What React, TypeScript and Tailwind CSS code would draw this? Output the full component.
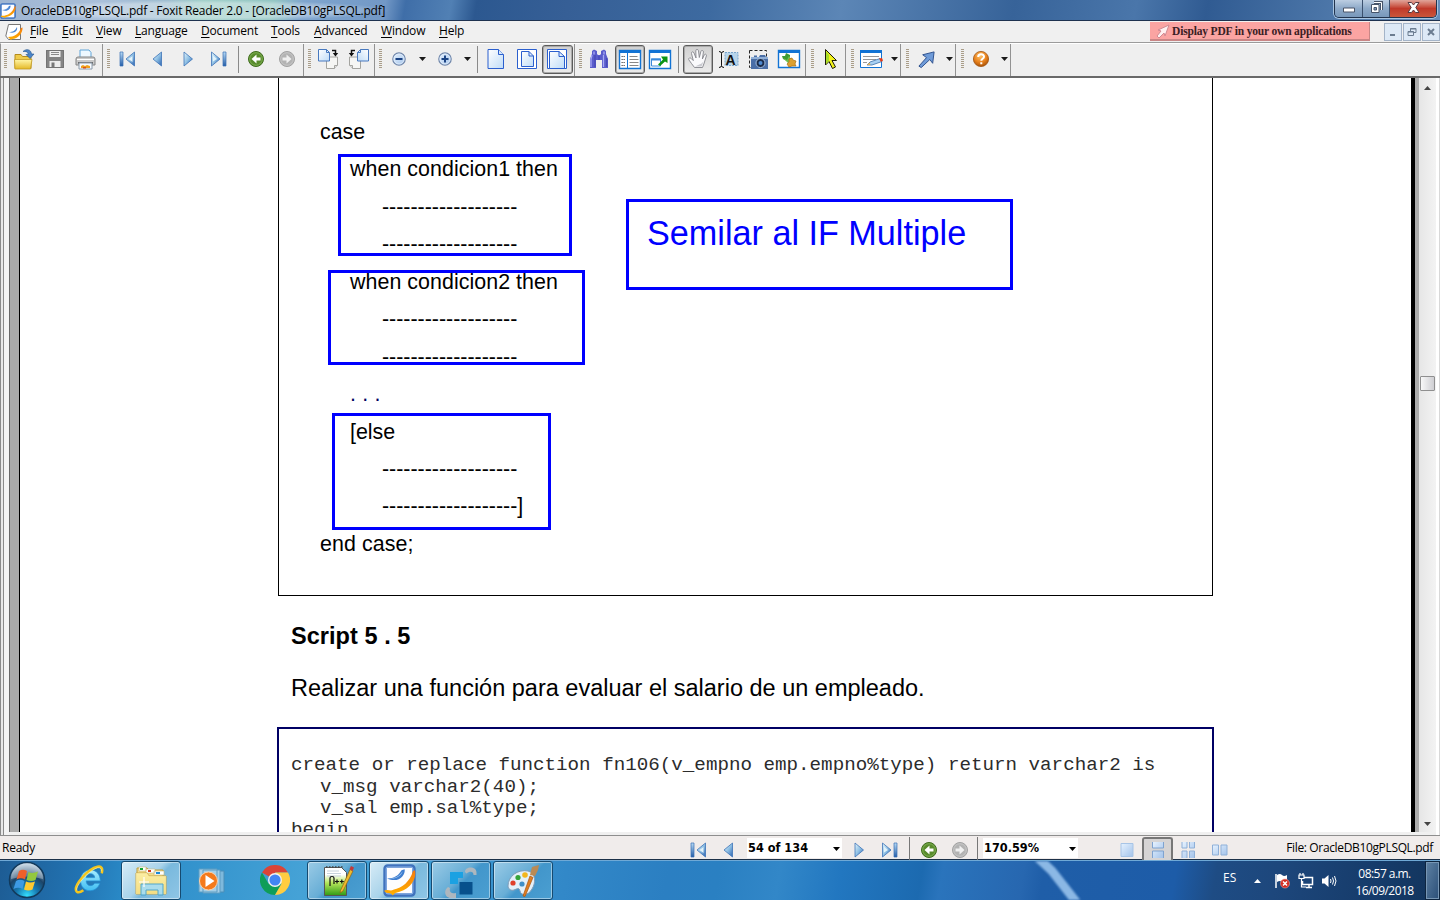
import React from "react";

type Kids = { children?: React.ReactNode };

const Svg = ({ s = 20, vb = "0 0 20 20", children }: Kids & { s?: number; vb?: string }) => (
  <svg width={s} height={s} viewBox={vb} className="block shrink-0" fill="none">
    {children}
  </svg>
);

const Defs = () => (
  <svg width="0" height="0" className="absolute">
    <defs>
      <linearGradient id="blue" x1="0" y1="0" x2="0" y2="1">
        <stop offset="0" stopColor="#b9dcf6" />
        <stop offset="1" stopColor="#245da8" />
      </linearGradient>
      <linearGradient id="tri" x1="0" y1="0" x2="1" y2="1">
        <stop offset="0" stopColor="#e6f6fc" />
        <stop offset=".5" stopColor="#8fc0e4" />
        <stop offset="1" stopColor="#2a62b0" />
      </linearGradient>
      <linearGradient id="page" x1="0" y1="0" x2="1" y2="1">
        <stop offset="0" stopColor="#ffffff" />
        <stop offset="1" stopColor="#bfdcf7" />
      </linearGradient>
      <linearGradient id="pageBlue" x1="0" y1="0" x2="1" y2="1">
        <stop offset="0" stopColor="#e6f2ff" />
        <stop offset="1" stopColor="#a3c3ea" />
      </linearGradient>
      <linearGradient id="gold" x1="0" y1="0" x2="0" y2="1">
        <stop offset="0" stopColor="#fff6a8" />
        <stop offset="1" stopColor="#e5b928" />
      </linearGradient>
      <linearGradient id="orange" x1="0" y1="0" x2="0" y2="1">
        <stop offset="0" stopColor="#f47a10" />
        <stop offset="1" stopColor="#ffb000" />
      </linearGradient>
      <linearGradient id="lime" x1="0" y1="0" x2="0" y2="1">
        <stop offset=".25" stopColor="#ffffff" />
        <stop offset=".55" stopColor="#b4e65a" />
        <stop offset="1" stopColor="#2f9a14" />
      </linearGradient>
      <radialGradient id="orb" cx=".5" cy=".95" r=".9">
        <stop offset="0" stopColor="#35e0ff" />
        <stop offset=".35" stopColor="#1678b0" />
        <stop offset=".65" stopColor="#1c4468" />
        <stop offset="1" stopColor="#b0c8da" />
      </radialGradient>
      <linearGradient id="ie" x1="0" y1="0" x2="0" y2="1">
        <stop offset="0" stopColor="#a8ecff" />
        <stop offset="1" stopColor="#3fbdf2" />
      </linearGradient>
      <radialGradient id="amber" cx=".45" cy=".3" r=".7">
        <stop offset="0" stopColor="#ffc46c" />
        <stop offset=".6" stopColor="#e8811c" />
        <stop offset="1" stopColor="#a85208" />
      </radialGradient>
    </defs>
  </svg>
);

/* ---------- toolbar icons ---------- */

const FoxitIcon = ({ s = 16 }: { s?: number }) => (
  <Svg s={s} vb="0 0 32 32">
    <rect x="2" y="2" width="28" height="28" rx="2.5" fill="#fdfdff" stroke="#3f72bd" strokeWidth="3.4" />
    <rect x="3" y="3" width="26" height="26" rx="2" stroke="#8db4e8" strokeWidth="1" />
    <path d="M4 14c7 0 11-3 14-8l3-1c1 6-6 14-17 9Z" fill="#3f7ed0" />
    <path d="M6 14c6 0 10-2 13-7-1 4-6 8-13 7Z" fill="#a8ccf2" />
    <path d="M1 26c4-2 6 1 9-1 9-2 16-8 19-18l2-1c2 10-6 20-19 22-2 1-2 3-3 2-2-3-5 0-8-4Z" fill="url(#orange)" />
  </Svg>
);

const OpenIcon = () => (
  <Svg s={22} vb="0 0 22 22">
    <path d="M2 6.500h6l1.500 2H18v12H2z" fill="#efcb4a" stroke="#b48a1c" />
    <path d="M1.500 11.500h17.500l-1.500 9.500H2z" fill="url(#gold)" stroke="#c39a22" strokeWidth=".8" />
    <path d="M10 3.500C13 .5 18 1 18.500 6H21l-4 4.500-4-4h2.400C15 4 13 3 10 3.500z" fill="#4c84c8" stroke="#24558f" strokeWidth=".6" />
  </Svg>
);
const SaveIcon = () => (
  <Svg>
    <path d="M1 1h18v18H1z" fill="#858585" />
    <path d="M4.500 1h11v7h-11z" fill="#f1f1f1" />
    <path d="M6 3.500h8M6 5.500h8" stroke="#8b8b8b" />
    <path d="M4.500 12h11v7h-11z" fill="#ededed" />
    <path d="M6.500 13.500h3v5h-3z" fill="#777" />
    <path d="M1.500 1.500h17v17h-17z" stroke="#747474" />
  </Svg>
);
const PrintIcon = () => (
  <Svg s={21} vb="0 0 21 21">
    <path d="M5 1h9l2 2.500V10H5z" fill="#eef8ff" stroke="#5ea4d8" />
    <path d="M1 10q0-2 2-2h15q2 0 2 2v6H1z" fill="#c9c9c9" stroke="#858585" />
    <path d="M2 10.500h17" stroke="#fff" />
    <path d="M3 14h15" stroke="#555" strokeWidth="1.600" />
    <path d="M4 14h13v6H4z" fill="#f7fbff" stroke="#8a9aaa" />
    <path d="M6 17l2-1 2 1 2-1 3 1v2H6z" fill="#f0a01c" />
    <path d="M8 18h3v1.500H8z" fill="#d9501c" />
  </Svg>
);
const FirstIcon = () => (
  <Svg s={18} vb="0 0 18 18">
    <path d="M2 2h3v14H2z" fill="url(#blue)" stroke="#3a70b4" strokeWidth=".7" />
    <path d="M16.500 2v14L8 9z" fill="url(#tri)" stroke="#3d74b8" strokeWidth=".8" />
    <path d="M14.500 6v6L10.500 9z" fill="#e3f3fa" />
  </Svg>
);
const LastIcon = () => (
  <Svg s={18} vb="0 0 18 18">
    <path d="M13 2h3v14h-3z" fill="url(#blue)" stroke="#3a70b4" strokeWidth=".7" />
    <path d="M1.500 2v14L10 9z" fill="url(#tri)" stroke="#3d74b8" strokeWidth=".8" />
    <path d="M3 5.500v6L7 9z" fill="#e3f3fa" />
  </Svg>
);
const PrevIcon = () => (
  <Svg s={18} vb="0 0 18 18">
    <path d="M12.500 2v14L4 9z" fill="url(#tri)" stroke="#3d74b8" strokeWidth=".8" />
  </Svg>
);
const NextIcon = () => (
  <Svg s={18} vb="0 0 18 18">
    <path d="M5 2v14L13.500 9z" fill="url(#tri)" stroke="#3d74b8" strokeWidth=".8" />
  </Svg>
);
const RoundArrow = ({ dim = false }: { dim?: boolean }) => (
  <Svg s={18} vb="0 0 18 18">
    <circle cx="9" cy="9" r="7.500" fill={dim ? "#b3b3b3" : "#588b2c"} stroke={dim ? "#a2a2a2" : "#3f6c1d"} />
    <circle cx="9" cy="9" r="6.300" stroke={dim ? "#cbcbcb" : "#86b75c"} strokeWidth=".8" />
    {dim ? (
      <path d="M4.500 7.500h4v-3L13.500 9l-5 4.500v-3h-4z" fill="#f0f0f0" />
    ) : (
      <path d="M13.500 7.500h-4v-3L4.500 9l5 4.500v-3h4z" fill="#fff" />
    )}
  </Svg>
);
const RotateIcon = ({ flip = false }: { flip?: boolean }) => (
  <Svg s={22} vb="0 0 22 22">
    <g transform={flip ? "matrix(-1 0 0 1 22 0)" : undefined}>
      <path d="M9.500 9h11v8l-3 3.500h-8z" fill="#f6f6f4" stroke="#a4a4a0" />
      <path d="M17.500 20.500v-3h3" stroke="#a4a4a0" fill="#ddd" />
      <path d="M1.500 1.500h8l3 3V13h-11z" fill="url(#page)" stroke="#4879bf" />
      <path d="M9.500 1.500v3h3" stroke="#4879bf" />
      <path d="M15 2.500h3.500V6" stroke="#111" strokeWidth="1.500" />
      <path d="M15.800 5h5.400l-2.700 3.500z" fill="#111" />
    </g>
  </Svg>
);
const ZoomIcon = ({ plus = false }: { plus?: boolean }) => (
  <Svg s={16} vb="0 0 16 16">
    <circle cx="8" cy="8" r="6.200" fill="url(#pageBlue)" stroke="#7187aa" strokeWidth="1.200" />
    <circle cx="8" cy="8" r="5" stroke="#e8f2fc" strokeWidth=".7" />
    <path d={plus ? "M4.500 8h7M8 4.500v7" : "M4.500 8h7"} stroke="#1c4484" strokeWidth="2" />
  </Svg>
);
const PageIcon = ({ kind }: { kind: 0 | 1 | 2 }) => (
  <Svg s={22} vb="0 0 22 22">
    {kind > 0 && <path d="M1.500 1.500h19v19h-19z" fill="#fff" stroke="#2b5fce" />}
    {kind === 0 && (
      <>
        <path d="M3 1.500h10.500l5 5v14H3z" fill="url(#page)" stroke="#2b5fce" />
        <path d="M13.500 1.500v5h5" fill="#d6e8fb" stroke="#2b5fce" />
      </>
    )}
    {kind === 1 && (
      <>
        <path d="M5.500 3.500h7.500l4.500 4.500v10.500h-12z" fill="url(#page)" stroke="#2b5fce" />
        <path d="M13 3.500v4.500h4.500" stroke="#2b5fce" />
      </>
    )}
    {kind === 2 && (
      <>
        <path d="M3.500 3.500H13l5.500 5v12h-15z" fill="url(#page)" stroke="#2b5fce" />
        <path d="M13 3.500v5h5.500" stroke="#2b5fce" />
      </>
    )}
  </Svg>
);
const BinocularsIcon = () => (
  <Svg>
    <path d="M3 2l2-1.500L8 2v3l1 1h2l1-1V2l3-1.500L17 2v3l2 5v9h-6v-8H7v8H1v-9l2-5z" fill="#5a5ccc" />
    <path d="M3 6l-1 4v8M5 2.500v3M15 2.500v3M14.500 6v12" stroke="#a8aaf4" strokeWidth="1.300" />
    <path d="M6 6v12M17.800 9v9M10 7v4" stroke="#4143ae" />
  </Svg>
);
const PanelIcon = () => (
  <svg width="24" height="21" viewBox="0 0 24 21" fill="none">
    <path d="M1.500 1.500h21v18h-21z" fill="#fff" stroke="#1273d4" strokeWidth="1.400" />
    <path d="M1 1h22v3H1z" fill="#1273d4" />
    <path d="M9.500 4v16" stroke="#1273d4" />
    <path d="M3.500 7.500H7M3.500 10.500H7M3.500 13.500H7M3.500 16.500H7" stroke="#555" strokeDasharray="1.300 .7" />
    <path d="M11.500 7.500h8M11.500 10.500h9M11.500 13.500h9M11.500 16.500h9" stroke="#888" />
  </svg>
);
const FullIcon = () => (
  <svg width="24" height="21" viewBox="0 0 24 21" fill="none">
    <path d="M1.500 1.500h21v18h-21z" fill="#fff" stroke="#1273d4" strokeWidth="1.400" />
    <path d="M1 1h22v3H1z" fill="#1273d4" />
    <path d="M3.500 10h9v7h-9z" fill="#fff" stroke="#3a8ada" />
    <path d="M3 9.500h10v2H3z" fill="#3a8ada" />
    <path d="M10 15.500l5-5-2-3h6.500V14l-2.500-1.500-5 4.500z" fill="#0c9414" />
  </svg>
);
const HandIcon = () => (
  <Svg s={22} vb="0 0 22 22">
    <path
      d="M7.500 19.500C5.500 17 3.500 14 1.800 11.800c-.5-2 1.300-2.500 2.500-1.200l2 2L4.500 5.500c-.3-2 1.800-2.300 2.500-.5l2 5L8.800 2.800c0-1.800 2.300-1.900 2.700 0l.8 6.700 1.600-6c.5-1.700 2.700-1.200 2.500.5l-1 7 1.800-4c.8-1.500 2.600-.8 2.200.8l-2.200 7.200-1.700 4.500z"
      fill="#fafafc"
      stroke="#85868c"
      strokeWidth=".9"
    />
    <path d="M8 18.500h6.500l2-5-2 2z" fill="#c9cad0" />
  </Svg>
);
const TextSelectIcon = () => (
  <Svg s={21} vb="0 0 21 18">
    <path d="M7 2h13v13H7z" fill="#b7d4ea" stroke="#79a6cc" strokeDasharray="2 1" />
    <path d="M1 1q2.500 0 2.500 2v12Q3.500 17 1 17M6 1Q3.500 1 3.500 3M3.500 15q0 2 2.500 2" stroke="#111" />
    <text x="12.500" y="14" textAnchor="middle" fontSize="14" fontWeight="700" fill="#111" fontFamily="Liberation Sans, sans-serif">A</text>
  </Svg>
);
const CameraIcon = () => (
  <Svg s={21} vb="0 0 21 21">
    <path d="M1.500 1.500h17v17h-17z" stroke="#222" strokeDasharray="3 2" />
    <path d="M3 8h3V6.500h3V8h2l1-2h5l1 2h2v12H3z" fill="#4a6ea6" />
    <path d="M3 8h17v2H3z" fill="#90b0d8" />
    <circle cx="12.500" cy="14" r="4.500" fill="#1c2c4a" stroke="#a4c0e4" />
    <circle cx="12.500" cy="14" r="2" fill="#4e8ad0" />
  </Svg>
);
const ImageIcon = () => (
  <svg width="24" height="20" viewBox="0 0 24 20" fill="none">
    <path d="M1.500 1.500h21v17h-21z" fill="#fff" stroke="#1273d4" strokeWidth="1.400" />
    <path d="M1 1h22v3H1z" fill="#1273d4" />
    <path d="M9 4l4 2v4l-3 2-4-2-1-3 3 0z" fill="#3f9b34" />
    <path d="M6 9l4 2 2-4 2 3-3 4z" fill="#6fc24c" />
    <path d="M12 10l3-1 1 2 3 1-1 3 1 2-4 0-3 1-2-3 2-2z" fill="#dca030" stroke="#a86e12" strokeWidth=".7" />
  </svg>
);
const PointerIcon = () => (
  <Svg s={22} vb="0 0 22 22">
    <path d="M5.500 1.500v15.500l3.500-3.500 3.500 7 3-1.500-3.500-6.500h4.500z" fill="#f2f21a" stroke="#1a1a08" />
    <path d="M6 3v13l3-3 0-6z" fill="#a8dc28" />
  </Svg>
);
const NoteIcon = () => (
  <svg width="25" height="20" viewBox="0 0 25 20" fill="none">
    <path d="M1.500 1.500h21v17h-21z" fill="#fff" stroke="#1273d4" />
    <path d="M1 1h22v3H1z" fill="#1273d4" />
    <path d="M4 7.500h16M4 10.500h13M4 13.500h4" stroke="#999" />
    <path d="M8 16l3-3 10-3.500 2 3-10 3.500z" fill="#a8d0f2" stroke="#3a6ea8" strokeWidth=".8" />
    <path d="M20 9.500l3-.5 1 2.500-2 1.500z" fill="#e03a1a" />
    <path d="M8 16l2.500-2.500 1 2.500z" fill="#e8b050" />
  </svg>
);
const ArrowIcon = () => (
  <Svg s={19} vb="0 0 20 20">
    <path d="M2 17l8-9-4-3L18 2l-1.500 12-3-4L4.500 18.500z" fill="#6f9bd8" stroke="#2c4f8c" />
  </Svg>
);
const HelpIcon = () => (
  <Svg s={18} vb="0 0 18 18">
    <circle cx="9" cy="9" r="7.600" fill="url(#amber)" stroke="#a25410" strokeWidth=".8" />
    <path d="M6.200 7c0-3.600 5.800-3.500 5.800-.3 0 2.100-2.700 2.100-2.700 4.100M9.300 12.300v2" stroke="#fff" strokeWidth="2" />
  </Svg>
);

/* ---------- toolbar structure ---------- */

const Group = ({ w, children }: Kids & { w: string }) => (
  <div className={`flex h-full shrink-0 items-center border-r border-[#929292] pb-[2px] ${w}`}>{children}</div>
);
const Grip = () => (
  <div className="flex w-2 shrink-0 justify-center">
    <div className="h-[20px] w-[3px] bg-[repeating-linear-gradient(to_bottom,#a99d89_0px,#a99d89_1px,#efefef_1px,#efefef_2px)]" />
  </div>
);
const Slot = ({ on = false, children }: Kids & { on?: boolean }) => (
  <div
    className={`flex h-[29px] w-[30.5px] shrink-0 items-center justify-center ${
      on ? "rounded-[3px] border border-[#5b5b5b] bg-linear-to-b from-[#d0d0d0] to-[#ececec] shadow-[inset_0_0_0_1px_#aaa]" : ""
    }`}
  >
    {children}
  </div>
);
const Caret = () => (
  <div className="flex w-[15px] shrink-0 justify-center">
    <svg width="7" height="4" viewBox="0 0 7 4">
      <path d="M0 0h7L3.500 4z" fill="#1a1a1a" />
    </svg>
  </div>
);
const Divider = () => (
  <div className="flex w-2 shrink-0 justify-center">
    <div className="h-[27px] w-px bg-[#8a8a8a]" />
  </div>
);

const TitleBar = () => (
  <header className="flex h-[21px] w-full items-start overflow-hidden border-b border-[#1e3250] bg-[linear-gradient(100deg,#9fb6d2_0px,#a9bfda_100px,#9ebdd0_165px,#9fcfc8_200px,#94c6c4_270px,#7fa5ce_300px,#7298c6_380px,#3f6ea8_400px,#5180b4_445px,#2c5890_470px,#365f96_560px,#3d6aa0_700px,#5c86b6_830px,#376399_1000px,#4a76aa_1120px,#305b92_1190px,#6a93c0_1440px)]">
    <div className="mt-[3px] w-[21px] shrink-0">
      <FoxitIcon s={16} />
    </div>
    <div className="-ml-1 h-[21px] w-[373px] shrink-0 bg-[radial-gradient(closest-side,rgba(255,255,255,0.35)_70%,transparent)] pl-1 text-[12px] leading-[21px] tracking-[-0.235px] whitespace-nowrap text-black">
      OracleDB10gPLSQL.pdf - Foxit Reader 2.0 - [OracleDB10gPLSQL.pdf]
    </div>
    <div className="grow" />
    <div className="mr-[3px] flex h-[18px] shrink-0 overflow-hidden rounded-b-[5px] border border-t-0 border-[#22344e] shadow-[0_0_0_1px_#a8c4e0]">
      <div className="flex w-[28px] items-center justify-center border-r border-[#3a506e] bg-linear-to-b from-[#bccee2] via-[#8da9c8] via-50% to-[#7898bb]">
        <svg width="12" height="6" viewBox="0 0 12 6" className="mt-[2px]">
          <path d="M.5 1h11v4H.5z" fill="#fff" stroke="#4a5568" />
        </svg>
      </div>
      <div className="flex w-[27px] items-center justify-center border-r border-[#3a506e] bg-linear-to-b from-[#bccee2] via-[#8da9c8] via-50% to-[#7898bb]">
        <svg width="13" height="13" viewBox="0 0 13 13" fill="none" className="-mt-[2px]">
          <path d="M4 1.500h7.500V9" stroke="#46546a" strokeWidth="3" />
          <path d="M4 1.500h7.500V9" stroke="#fff" />
          <path d="M1.500 3.500h7.500v8H1.500z" fill="#fff" stroke="#46546a" />
          <path d="M4 6.500h2.500V9H4z" fill="#7c98ba" stroke="#46546a" />
        </svg>
      </div>
      <div className="flex w-[46px] items-center justify-center bg-linear-to-b from-[#e0a49a] via-[#c0392a] via-50% to-[#c9553b]">
        <svg width="13" height="11" viewBox="0 0 13 11" className="-mt-[2px]">
          <path d="M1 .500h3.500l2 2.500 2-2.500H12L8.800 5.500 12 10.500H8.500l-2-2.500-2 2.500H1l3.200-5z" fill="#fff" stroke="#573a42" />
        </svg>
      </div>
    </div>
  </header>
);

const menus: [string, string][] = [
  ["File", "w-[32px]"],
  ["Edit", "w-[34px]"],
  ["View", "w-[39px]"],
  ["Language", "w-[66px]"],
  ["Document", "w-[70px]"],
  ["Tools", "w-[43px]"],
  ["Advanced", "w-[67px]"],
  ["Window", "w-[58px]"],
  ["Help", "w-[40px]"],
];

const MdiButton = ({ children }: Kids) => (
  <div className="flex h-[18px] w-[18px] items-center justify-center border border-[#a4b4c8] bg-[#dde9f6]">
    <svg width="10" height="10" viewBox="0 0 10 10" fill="none" stroke="#6b7c90">
      {children}
    </svg>
  </div>
);

const MenuBar = () => (
  <nav className="flex h-[22px] w-full items-center border-b border-[#9b9b9b] bg-[#f0f0f0] text-[12px] leading-[18px] text-black">
    <div className="w-[30px] shrink-0 pl-[5px]">
      <Svg s={18} vb="0 0 18 18">
        <path d="M3.500 1.500h12v15h-12L.8 13z" fill="#fff" stroke="#777" />
        <path d="M4 9c4 0 6-1 8-5 1 4-3 7-8 5z" fill="#4a84d0" />
        <path d="M3 14c6 0 11-3 13-9l1.500-.5C18 10 13 16 7 16l-1 1z" fill="url(#orange)" />
      </Svg>
    </div>
    {menus.map(([m, w]) => (
      <span key={m} className={`${w} shrink-0 pb-[2px] tracking-[-0.18px] whitespace-nowrap`}>
        <span className="underline underline-offset-2">{m[0]}</span>
        {m.slice(1)}
      </span>
    ))}
    <div className="grow" />
    <div className="flex h-[19px] w-[220px] items-center gap-px border-r border-b-2 border-[#c98686] bg-[#fba4a2] pl-[6px]">
      <svg width="15" height="16" viewBox="0 0 15 16">
        <path d="M13 2L2 7l3 1-4 5 2 2 5-5 1 3z" fill="#fff0f0" stroke="#d18a92" />
      </svg>
      <span className="pt-px font-['Liberation_Serif',serif] text-[11.5px] font-bold tracking-[-0.17px] whitespace-nowrap text-[#3a2024]">
        Display PDF in your own applications
      </span>
    </div>
    <div className="ml-[14px] flex gap-px">
      <MdiButton>
        <path d="M2 8h5" strokeWidth="2" />
      </MdiButton>
      <MdiButton>
        <path d="M3.500 4V1.500h5.500v4H7M1 4.500h5.500v4H1zM1 5h5.500M3 2h6" />
      </MdiButton>
      <div className="-mr-px">
        <MdiButton>
          <path d="M2 2l6 6M8 2L2 8" strokeWidth="2" />
        </MdiButton>
      </div>
      <div className="w-0" />
    </div>
  </nav>
);

const Toolbar = () => (
  <div className="flex h-[33px] w-full items-center border-t border-l border-t-white border-l-[#929292] bg-[#efefef]">
    <Group w="w-[102px]">
      <Grip />
      <Slot><OpenIcon /></Slot>
      <Slot><SaveIcon /></Slot>
      <Slot><PrintIcon /></Slot>
    </Group>
    <Group w="w-[201px] pl-px">
      <Grip />
      <Slot><FirstIcon /></Slot>
      <Slot><PrevIcon /></Slot>
      <Slot><NextIcon /></Slot>
      <Slot><LastIcon /></Slot>
      <Divider />
      <div className="-ml-px flex">
        <Slot><RoundArrow /></Slot>
        <Slot><RoundArrow dim /></Slot>
      </div>
    </Group>
    <Group w="w-[71px] pl-px">
      <Grip />
      <Slot><RotateIcon /></Slot>
      <Slot><RotateIcon flip /></Slot>
    </Group>
    <Group w="w-[200px] pl-px">
      <Grip />
      <Slot><ZoomIcon /></Slot>
      <Caret />
      <Slot><ZoomIcon plus /></Slot>
      <Caret />
      <div className="-ml-[2px] flex items-center">
        <Divider />
        <Slot><PageIcon kind={0} /></Slot>
        <Slot><PageIcon kind={1} /></Slot>
        <Slot on><PageIcon kind={2} /></Slot>
      </div>
    </Group>
    <Group w="w-[231px] pl-px">
      <Grip />
      <Slot><BinocularsIcon /></Slot>
      <Slot on><PanelIcon /></Slot>
      <Slot><FullIcon /></Slot>
      <div className="-ml-px flex items-center">
        <Divider />
        <Slot on><HandIcon /></Slot>
        <Slot><TextSelectIcon /></Slot>
        <Slot><CameraIcon /></Slot>
        <Slot><ImageIcon /></Slot>
      </div>
    </Group>
    <Group w="w-[40px] pl-[2px]">
      <Grip />
      <Slot><PointerIcon /></Slot>
    </Group>
    <Group w="w-[55px] pl-[2px]">
      <Grip />
      <Slot><NoteIcon /></Slot>
      <Caret />
    </Group>
    <Group w="w-[55px] pl-[2px]">
      <Grip />
      <Slot><ArrowIcon /></Slot>
      <Caret />
    </Group>
    <Group w="w-[55px] pl-[2px]">
      <Grip />
      <Slot><HelpIcon /></Slot>
      <Caret />
    </Group>
  </div>
);

/* ---------- document ---------- */

const caseLines: [string, string][] = [
  ["case", "pl-[41px]"],
  ["when condicion1 then", "pl-[71px] tracking-[0.05px]"],
  ["-------------------", "pl-[103px]"],
  ["-------------------", "pl-[103px]"],
  ["when condicion2 then", "pl-[71px] tracking-[0.05px]"],
  ["-------------------", "pl-[103px]"],
  ["-------------------", "pl-[103px]"],
  [". . .", "pl-[71px] text-[#000060] tracking-[0.2px]"],
  ["[else", "pl-[71px]"],
  ["-------------------", "pl-[103px]"],
  ["-------------------]", "pl-[103px]"],
  ["end case;", "pl-[41px] tracking-[0.1px]"],
];

const DocumentView = () => (
  <main className="flex h-[759px] w-full border-t-2 border-[#696969] bg-[#f0f0f0]">
    <div className="w-[4px] shrink-0 border-r border-l border-[#8a8a8a] bg-[#e8e8e8]" />
    <div className="w-[5px] shrink-0 bg-[#f4f4f4]" />
    <div className="flex h-[754px] grow overflow-hidden border-l border-[#696969] bg-[#ababab] pl-[9px]">
      <article className="relative h-full w-[1396px] shrink-0 overflow-hidden border-r-4 border-l border-black bg-white pl-[258px] font-['Liberation_Sans',Arial,sans-serif] text-black">
        <section className="h-[518px] w-[935px] border border-t-0 border-black pt-[36px]">
          {caseLines.map(([t, c], i) => (
            <p key={i} className={`h-[37.45px] text-[21.4px] leading-[37.45px] whitespace-pre ${c}`}>
              {t}
            </p>
          ))}
        </section>
        <h2 className="mt-[26px] pl-[13px] text-[23.5px] leading-[28px] font-bold tracking-[0.05px]">Script 5 . 5</h2>
        <p className="mt-[24px] pl-[13px] text-[23.5px] leading-[28px] whitespace-nowrap">
          Realizar una función para evaluar el salario de un empleado.
        </p>
        <pre className="mt-[25px] -ml-px h-[140px] w-[937px] border-2 border-[#000064] pt-[26px] pl-[12px] font-['Liberation_Mono','Courier_New',monospace] text-[19.2px] leading-[21.6px] tracking-[0.01px] text-[#2c2c2c]">
          <span className="block">create or replace function fn106(v_empno emp.empno%type) return varchar2 is</span>
          <span className="block pl-[29px]">v_msg varchar2(40);</span>
          <span className="block pl-[29px]">v_sal emp.sal%type;</span>
          <span className="block">begin</span>
        </pre>
        <div className="absolute top-[76px] left-[318px] h-[102px] w-[234px] border-3 border-[#0000ff]" />
        <div className="absolute top-[192px] left-[308px] h-[95px] w-[257px] border-3 border-[#0000ff]" />
        <div className="absolute top-[335px] left-[312px] h-[117px] w-[219px] border-3 border-[#0000ff]" />
        <div className="absolute top-[121px] left-[606px] h-[91px] w-[387px] border-3 border-[#0000ff] pt-[11px] pl-[18px] text-[34.2px] leading-[40px] whitespace-nowrap text-[#0000ff]">
          Semilar al IF Multiple
        </div>
      </article>
    </div>
    <div className="flex h-[754px] w-[17px] shrink-0 flex-col items-center bg-linear-to-r from-[#e6e6e6] to-[#f3f3f3]">
      <svg width="7" height="4" viewBox="0 0 7 4" className="mt-[8px] shrink-0">
        <path d="M0 4h7L3.500 0z" fill="#444" />
      </svg>
      <div className="mt-[286px] h-[15px] w-[15px] shrink-0 rounded-[1px] border border-[#8f8f8f] bg-linear-to-r from-[#f8f8f8] to-[#cfcfd3]" />
      <div className="grow" />
      <svg width="7" height="4" viewBox="0 0 7 4" className="mb-[6px] shrink-0">
        <path d="M0 0h7L3.500 4z" fill="#444" />
      </svg>
    </div>
    <div className="w-[4px] shrink-0 border-r border-[#d8d8d8] bg-white" />
  </main>
);

/* ---------- status bar ---------- */

const Field = ({ children }: Kids) => (
  <div className="flex h-[20px] w-[95px] shrink-0 items-center justify-between bg-white pr-[2px] pl-px">
    <span className="font-['DejaVu_Sans_Condensed','DejaVu_Sans',sans-serif] text-[12.6px] leading-[18px] font-bold whitespace-nowrap text-black [font-stretch:condensed]">
      {children}
    </span>
    <svg width="7" height="4" viewBox="0 0 7 4" className="mt-[2px]">
      <path d="M0 0h7L3.500 4z" fill="#000" />
    </svg>
  </div>
);

const Nav = ({ children }: Kids) => (
  <div className="mt-[3px] flex w-[31px] shrink-0 items-center justify-center">{children}</div>
);

const StatusBar = () => (
  <div className="flex h-[25px] w-full items-center border-t border-b border-t-[#8e8e8e] border-b-[#1c3048] bg-[#f0eceb] pt-px text-[12px] text-black">
    <span className="w-[682px] shrink-0 pl-[2px] tracking-[-0.25px]">Ready</span>
    <Nav><FirstIcon /></Nav>
    <Nav><PrevIcon /></Nav>
    <div className="w-[3px] shrink-0" />
    <Field>54 of 134</Field>
    <div className="w-px shrink-0" />
    <Nav><NextIcon /></Nav>
    <Nav><LastIcon /></Nav>
    <div className="mr-[3px] ml-[4px] h-[23px] w-px shrink-0 bg-[#777]" />
    <Nav><RoundArrow /></Nav>
    <Nav><RoundArrow dim /></Nav>
    <div className="mr-[5px] ml-[2px] h-[23px] w-px shrink-0 bg-[#777]" />
    <Field>170.59%</Field>
    <div className="w-[33px] shrink-0" />
    <Nav>
      <Svg s={16} vb="0 0 16 16">
        <path d="M2 1.500h12v13H2z" fill="url(#pageBlue)" stroke="#a7c4e6" />
      </Svg>
    </Nav>
    <div className="flex h-[23px] w-[31px] shrink-0 items-center justify-center rounded-t-[3px] border-2 border-b-0 border-[#777] bg-[#d6d4d4] pt-px">
      <Svg s={16} vb="0 0 16 16">
        <path d="M2.500 0v6h11V0M2.500 16V9h11v7" fill="url(#pageBlue)" stroke="#7fa3d0" />
      </Svg>
    </div>
    <Nav>
      <Svg s={16} vb="0 0 16 16">
        <path d="M1 0v6h5V0M8.500 0v6h5V0M1 16V9h5v7M8.500 16V9h5v7" fill="url(#pageBlue)" stroke="#8fb0d8" />
      </Svg>
    </Nav>
    <Nav>
      <Svg s={16} vb="0 0 16 16">
        <path d="M.5 3h6v10h-6zM9 3h6v10H9z" fill="url(#pageBlue)" stroke="#8fb0d8" />
      </Svg>
    </Nav>
    <span className="grow pr-[7px] text-right tracking-[-0.35px] whitespace-nowrap">File: OracleDB10gPLSQL.pdf</span>
  </div>
);

/* ---------- taskbar ---------- */

const TaskButton = ({ active = false, children }: Kids & { active?: boolean }) => (
  <div
    className={`mr-[2px] flex h-[39px] w-[60px] shrink-0 items-center justify-center rounded-[3px] border border-[#164a70] shadow-[inset_0_0_0_1px_rgba(255,255,255,0.45)] ${
      active
        ? "bg-[linear-gradient(135deg,#d7ecf7_0%,#a9d3ea_45%,#7ab9dd_55%,#8fc6e6_100%)]"
        : "bg-[linear-gradient(135deg,#9bcbe6_0%,#68aed6_45%,#4296cb_55%,#4b9fd1_100%)]"
    }`}
  >
    {children}
  </div>
);

const StartOrb = () => (
  <Svg s={38} vb="0 0 38 38">
    <circle cx="19" cy="19" r="17.500" fill="url(#orb)" stroke="#123a5c" strokeWidth="1.500" />
    <path d="M3 18a16 16 0 0 1 32 0q-16-5-32 0z" fill="#fff" opacity=".3" />
    <path d="M11 10q4-2.500 8 0L17 18.500q-4-2.500-8.500 0z" fill="#f0602a" />
    <path d="M20.500 11q4 2 9.500-.5l-2.500 8.500q-4 2-9 0z" fill="#93c83e" />
    <path d="M8 20q4-2.500 8.500 0L14.500 28q-4-2.500-9 0z" fill="#3d9ae4" />
    <path d="M18 20.500q4 2 9 0L24.500 28.500q-4 2-8.500 0z" fill="#ffca30" />
  </Svg>
);
const IeIcon = () => (
  <Svg s={32} vb="0 0 34 34">
    <path
      d="M29 19H14c0 6 7 6.500 9 2.500h5.500C25 33 8 32 8 18.500 8 4 29 3 29 19zM14 15.500h9c0-5.500-8.500-5.500-9 0z"
      fill="url(#ie)"
      stroke="#2492d4"
      strokeWidth=".8"
      fillRule="evenodd"
    />
    <path d="M30.500 11c1.500-5 0-8-4.500-7C16 6-1 25 4 30.500c2 1.500 5 0 7-1.500" stroke="#f4c51c" strokeWidth="2.600" />
    <path d="M30 9c.5-3-1-4.500-4-4C17 8 2.500 24 4 29" stroke="#fff09a" strokeWidth=".8" />
  </Svg>
);
const ExplorerIcon = () => (
  <Svg s={34} vb="0 0 34 34">
    <path d="M3 4h10l2 2h14v22H3z" fill="#f3dc8c" stroke="#bf9e3e" />
    <path d="M5 3h7v4H5zM12 5h9v4h-9zM20 7h10v4H20z" fill="#fff" stroke="#c9b878" strokeWidth=".6" />
    <path d="M6 4h3v2H6z" fill="#14a434" />
    <path d="M14 6h3v2h-3z" fill="#d83a1c" />
    <path d="M22 8h4v2h-4z" fill="#1c8ad8" />
    <path d="M2 9h11l2 3h17v18H2z" fill="url(#gold)" stroke="#caa94c" />
    <path d="M2 9h11l2 3h17v18H2z" fill="#fae9a2" opacity=".75" />
    <path d="M7 31V20h22v11h-5v-5H12v5z" fill="#a6dcf2" stroke="#4ba4cc" opacity=".95" />
    <path d="M10 13v10M5 18h10" stroke="#fff" strokeWidth="1.200" />
  </Svg>
);
const WmpIcon = () => (
  <Svg s={30} vb="0 0 30 30">
    <path d="M10 5h17v21H10z" fill="#7eb9dc" stroke="#4a8eb8" />
    <path d="M6 4h17v23H6zM2 3h18v23H2z" fill="#a4cfe8" stroke="#5c9cc2" />
    <circle cx="11.500" cy="15" r="9" fill="#f47a1c" stroke="#fbd0a8" />
    <path d="M8.500 9l9 6-9 6z" fill="#fff" />
  </Svg>
);
const ChromeIcon = () => (
  <Svg s={30} vb="0 0 30 30">
    <path d="M15 15L2 7.500A15 15 0 0 1 28 7.500H15z" fill="#db4437" />
    <path d="M15 15L8.500 18.800 2 7.500A15 15 0 0 0 15 30l6.500-11.200z" fill="#0f9d58" />
    <path d="M15 7.500h13A15 15 0 0 1 15 30l6.500-11.200z" fill="#ffcd40" />
    <circle cx="15" cy="15" r="7" fill="#f1f1f1" />
    <circle cx="15" cy="15" r="5.600" fill="#4285f4" />
  </Svg>
);
const NotepadIcon = () => (
  <Svg s={34} vb="0 0 34 34">
    <path d="M4.500 3.500h17l5 5v23h-22z" fill="url(#lime)" stroke="#555" />
    <path d="M6 3h17" stroke="#444" strokeWidth="1.500" strokeDasharray="1.500 1.500" />
    <path d="M7 7h12M7 9.500h14M7 12h14" stroke="#c7d2dc" />
    <path d="M10 22v-8q0-1.500 2-1.500t2 1.500v6M15 17.500h4M17 15.500v4M19.800 17.500h4M21.800 15.500v4" stroke="#111" strokeWidth="1.200" />
    <path d="M20.500 26.500L30 5.500l3 1.500L23 27l-3 2z" fill="#f0b92e" stroke="#8a6414" strokeWidth=".7" />
    <path d="M29.500 5l1.500-3 3 1.500L32.500 7z" fill="#c23a3a" />
  </Svg>
);
const SquaresIcon = () => (
  <Svg s={34} vb="0 0 34 34">
    <path d="M6 8h13v6h-5v6H6z" fill="#1ba1e2" />
    <path d="M15.500 18h13v12.500h-13z" fill="#07508c" />
    <path d="M21 8c0-6 12-6 11.500 1v2h-3c0-4-4-4-7-1.500z" fill="#aeb7be" />
    <path d="M4 23c-5 4-3 11 3 11h5v-5c-5 1-7-1-6-5z" fill="#aeb7be" />
  </Svg>
);
const PaintIcon = () => (
  <Svg s={34} vb="0 0 34 34">
    <path d="M2 22C2 12 12 5 22 7c8 2 8 12 4 18-4 7-11 7-12 2-1-4-3-2-6-1s-6-1-6-4z" fill="#e3f0fa" stroke="#7f9cb8" />
    <circle cx="7" cy="19" r="2.600" fill="#e0402c" />
    <circle cx="12" cy="13.500" r="2.600" fill="#35a43a" />
    <circle cx="19" cy="11" r="2.800" fill="#f3b61e" />
    <circle cx="16" cy="20" r="2.600" fill="#3f8fc8" />
    <path d="M17 32l7-20 3 1.500-8 19z" fill="#e07d22" stroke="#a8540e" strokeWidth=".7" />
    <path d="M24 11l2-8 7-2-1 5-3 6z" fill="#b98a54" />
  </Svg>
);

const Taskbar = () => (
  <footer className="flex h-[40px] w-full items-start overflow-hidden border-t border-[#6fa9d6] bg-[linear-gradient(100deg,#1d5c94_0px,#2273b2_80px,#2a8bc8_130px,#45a2d6_300px,#3c9cd4_420px,#3288c8_560px,#2b7fc2_660px,#2a80c2_710px,#3287c8_770px,#2277c0_830px,#1c6ab0_910px,#2a74bc_930px,#2767b0_1010px,#1f5ea8_1030px,#1d5ca8_1160px,#1e4c84_1200px,#1d477c_1260px,#153a68_1370px,#123358_1440px)] text-white">
    <div className="w-[72px] shrink-0 pl-[8px]">
      <StartOrb />
    </div>
    <div className="w-[49px] shrink-0 pt-[2px] pl-px">
      <IeIcon />
    </div>
    <TaskButton active>
      <ExplorerIcon />
    </TaskButton>
    <div className="w-[77px] shrink-0 pt-[5px] pl-[14px]">
      <WmpIcon />
    </div>
    <div className="w-[47px] shrink-0 pt-[4px]">
      <ChromeIcon />
    </div>
    <TaskButton>
      <NotepadIcon />
    </TaskButton>
    <TaskButton active>
      <FoxitIcon s={33} />
    </TaskButton>
    <TaskButton>
      <SquaresIcon />
    </TaskButton>
    <TaskButton>
      <PaintIcon />
    </TaskButton>
    <div className="h-full grow">
      <svg width="80" height="39" viewBox="0 0 80 39" className="ml-[470px] blur-[1px]">
        <path d="M11 -5L27 10 52 42" stroke="#9fc8f0" strokeWidth="9" fill="none" opacity=".85" />
      </svg>
    </div>
    <span className="w-[30px] shrink-0 pt-[8px] text-[12px] leading-[18px]">ES</span>
    <div className="flex h-full w-[98px] shrink-0 items-center pl-px">
      <svg width="7" height="4" viewBox="0 0 7 4" className="mr-[13px]">
        <path d="M0 4h7L3.500 0z" fill="#fff" />
      </svg>
      <svg width="17" height="16" viewBox="0 0 17 16" fill="none" className="mr-[7px]">
        <path d="M2 1v14" stroke="#fff" strokeWidth="1.500" />
        <path d="M3 2q3-2 5 0t5 0v7q-3 2-5 0T3 9z" fill="#fff" />
        <circle cx="11" cy="10.500" r="4.500" fill="#d42a20" stroke="#f0a8a0" strokeWidth=".6" />
        <path d="M9 8.500l4 4M13 8.500l-4 4" stroke="#fff" strokeWidth="1.500" />
      </svg>
      <svg width="16" height="16" viewBox="0 0 16 16" fill="none" className="mr-[7px]">
        <path d="M6 4.500h8.500v7H4.500V8M8 14.500h6M11 12v2" stroke="#fff" strokeWidth="1.500" />
        <path d="M1 2h5v3.500H1zM2 0v2M5 0v2M3.500 5v9H8" stroke="#fff" strokeWidth="1.200" />
      </svg>
      <svg width="17" height="14" viewBox="0 0 17 14" fill="none">
        <path d="M1 4.500h2.500L7.500 1v12L3.500 9.500H1z" fill="#fff" />
        <path d="M9.500 5q1 2 0 4M11.500 3.500q2 3.500 0 7M13.500 2q3 5 0 10" stroke="#fff" />
      </svg>
    </div>
    <div className="w-[74px] shrink-0 pt-[4px] pr-[7px] text-center text-[12px] leading-[17px] tracking-[-0.55px] whitespace-nowrap">
      <div>08:57 a.m.</div>
      <div>16/09/2018</div>
    </div>
    <div className="h-[39px] w-[15px] shrink-0 border border-[#0d2540] bg-linear-to-br from-[#5f82a4] to-[#2b4f78] shadow-[inset_0_0_0_1px_#7796b4]" />
  </footer>
);

export default function App() {
  return (
    <div className="flex h-[900px] w-[1440px] flex-col overflow-hidden bg-[#f0f0f0] font-['Open_Sans','Noto_Sans',sans-serif]">
      <Defs />
      <TitleBar />
      <MenuBar />
      <Toolbar />
      <DocumentView />
      <StatusBar />
      <Taskbar />
    </div>
  );
}
